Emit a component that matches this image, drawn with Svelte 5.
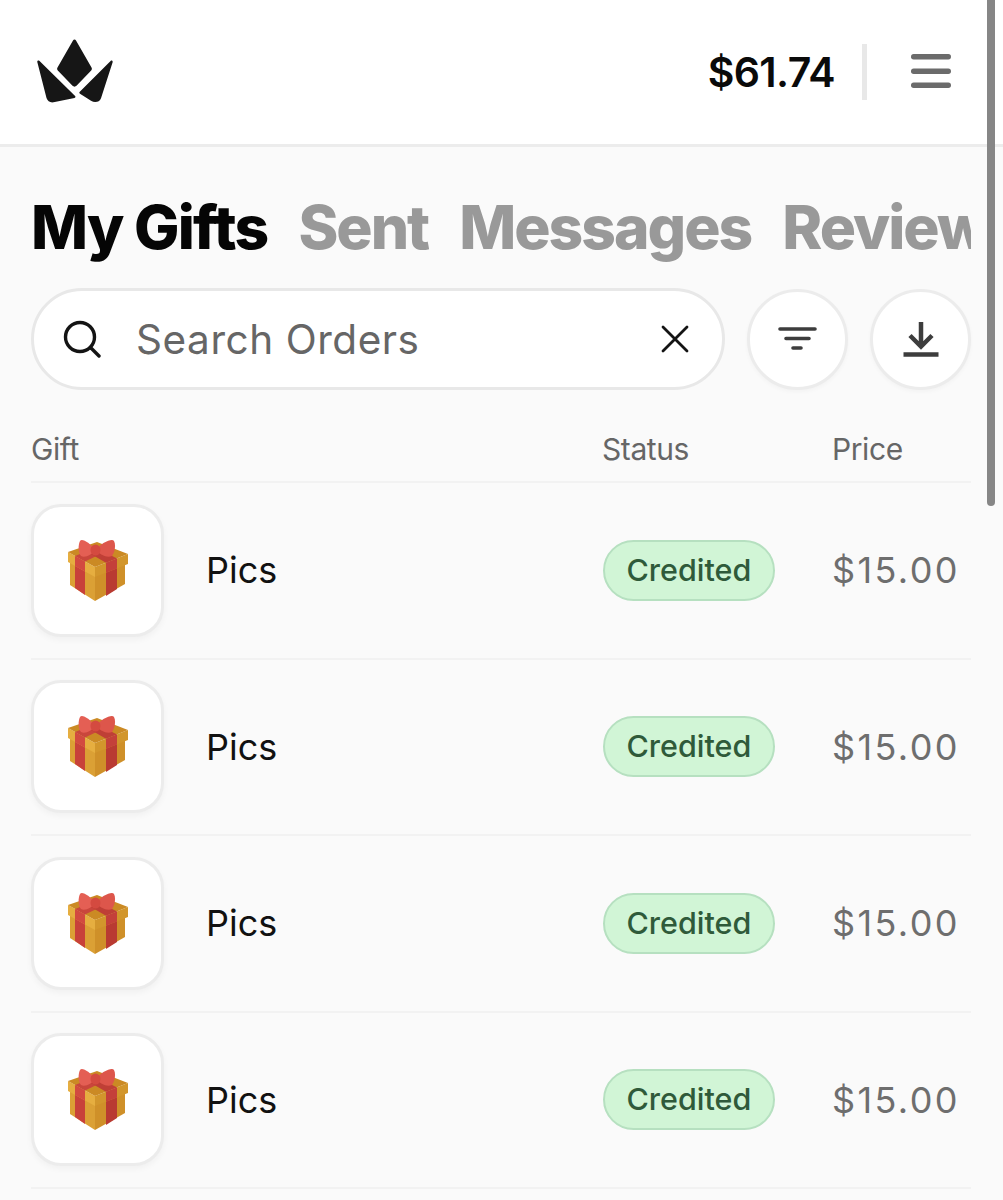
<script>
  const rows = [1, 2, 3, 4].map(() => ({ name: 'Pics', status: 'Credited', price: '$15.00' }));
</script>

<div class="page">
  <header class="topbar">
    <svg class="logo" viewBox="0 0 76 64" aria-label="logo">
      <path d="M36 1.500c.7-1.200 2.300-1.200 3 0l15.500 27c.6 1 .5 2.200-.3 3L39.500 46.800c-1.100 1.100-2.900 1.100-4 0L20.800 31.500c-.8-.8-.9-2-.3-3z" fill="#161616" />
      <path d="M.3 23c-.3-1.300 1-2 2-1.200l35.800 35.300c.7.700.4 1.700-.6 1.900L16.500 63.300c-3.500.5-6-1.300-7-4.300z" fill="#161616" />
      <path d="M75.700 23c.2-1.300-1.200-2-2.100-1.100L42.800 52.800c-.7.700-.6 1.500.2 2l11 7c3.600 2.200 8.500 1.500 10-2.600z" fill="#161616" />
    </svg>
    <div class="account">
      <span class="balance">$61.74</span>
      <span class="divider"></span>
      <svg class="menu" viewBox="0 0 40 36" aria-label="menu">
        <rect x="0" y="0" width="40" height="5.500" rx="2.700" />
        <rect x="0" y="14.500" width="40" height="5.500" rx="2.700" />
        <rect x="0" y="28.500" width="40" height="5.500" rx="2.700" />
      </svg>
    </div>
  </header>

  <main class="content">
    <nav class="tabs">
      <span class="tab active">My Gifts</span>
      <span class="tab">Sent</span>
      <span class="tab">Messages</span>
      <span class="tab">Reviews</span>
    </nav>

    <div class="tools">
      <div class="search">
        <svg class="search-icon" viewBox="0 0 38 38" fill="none" stroke="#141414" stroke-width="3.400" stroke-linecap="round">
          <circle cx="17" cy="17" r="14.500" />
          <path d="M28 28l8 8" />
        </svg>
        <span class="placeholder">Search Orders</span>
        <svg class="clear" viewBox="0 0 28 28" fill="none" stroke="#141414" stroke-width="2.800" stroke-linecap="round">
          <path d="M2 2l24 24M26 2L2 26" />
        </svg>
      </div>
      <button class="round" aria-label="filter">
        <svg viewBox="0 0 40 28" width="40" height="28" fill="none" stroke="#3d3d3d" stroke-width="3.600" stroke-linecap="round">
          <path d="M2 4h35M8 13.500h23M15 23h8" />
        </svg>
      </button>
      <button class="round" aria-label="download">
        <svg viewBox="0 0 36 36" width="36" height="36" fill="none" stroke="#3d3d3d" stroke-width="4.500">
          <path d="M18 1v24M7 14.500l11 11 11-11" />
          <path d="M0.500 33.500h35" />
        </svg>
      </button>
    </div>

    <div class="table-head">
      <span>Gift</span>
      <span>Status</span>
      <span>Price</span>
    </div>

    {#each rows as row}
      <div class="row">
        <div class="gift">
          <div class="thumb">
            <svg class="present" viewBox="0 0 62 63">
              <!-- box sides -->
              <path d="M3 22L28 36V62L3 46z" fill="#dba035" />
              <path d="M28 36L58 23V45L28 62z" fill="#cf9029" />
              <path d="M8 26l10 5v25l-10-7z" fill="#c8413a" />
              <path d="M39 31l11-5v24l-11 7z" fill="#b93a32" />
              <!-- lid -->
              <path d="M1 13L28 28V38L1 23z" fill="#e6ae40" />
              <path d="M28 28L61 15V25L28 38z" fill="#d2962c" />
              <path d="M1 13L30 3L61 15L28 28z" fill="#cb8a24" />
              <path d="M8 17l10 5.500v10L8 27z" fill="#d24a40" />
              <path d="M39 23.800l11-4.400v10l-11 4.400z" fill="#c4403a" />
              <path d="M8 17l10 5.500L40 12l-9-4z" fill="#c9463c" />
              <path d="M39 23.800l11-4.400L26 7l-9 4z" fill="#bf3f36" />
              <!-- bow -->
              <path d="M28 11C23 4 15-1 13 2c-2 4-2 12 1 15 4 2 11-1 14-6z" fill="#e45f54" />
              <path d="M29 11C34 4 45-1 47 2c2 4 1 11-2 15-5 2-12-1-16-6z" fill="#dd564b" />
              <ellipse cx="28.500" cy="11" rx="5" ry="5.500" fill="#d44a40" />
            </svg>
          </div>
          <span class="name">{row.name}</span>
        </div>
        <div><span class="badge">{row.status}</span></div>
        <div class="price">{row.price}</div>
      </div>
    {/each}
  </main>

  <div class="scrollbar"></div>
</div>

<style>
  :global(body) {
    background: #fafafa;
  }

  .page {
    position: relative;
    min-height: 1200px;
    overflow: hidden;
    background: #fafafa;
    font-family: Inter, "Liberation Sans", sans-serif;
  }

  .topbar {
    height: 144px;
    box-sizing: content-box;
    display: flex;
    align-items: center;
    justify-content: space-between;
    padding: 0 52px 0 37px;
    background: #fff;
    border-bottom: 3px solid #ececec;
  }

  .logo {
    width: 76px;
    height: 64px;
    margin-top: -2px;
  }

  .account {
    display: flex;
    align-items: center;
  }

  .balance {
    font-size: 41px;
    font-weight: 600;
    letter-spacing: -0.6px;
    color: #0a0a0a;
  }

  .divider {
    width: 5px;
    height: 56px;
    margin: 0 44px 0 27px;
    background: #e8e8e8;
  }

  .menu {
    width: 40px;
    height: 36px;
    fill: #6b6b6b;
  }

  .content {
    padding: 0 32px 0 31px;
  }

  .tabs {
    display: flex;
    gap: 31px;
    padding-top: 44px;
    overflow: hidden;
    white-space: nowrap;
    font-size: 60.500px;
    font-weight: 800;
    line-height: 72px;
    letter-spacing: -2px;
    color: #999;
  }

  .tab.active {
    letter-spacing: -1.800px;
    color: #050505;
  }

  .tools {
    display: flex;
    align-items: center;
    gap: 22px;
    margin-top: 25px;
  }

  .search {
    flex: 1;
    height: 102px;
    box-sizing: border-box;
    display: flex;
    align-items: center;
    padding: 0 33px 0 29px;
    background: #fff;
    border: 3px solid #e8e8e8;
    border-radius: 51px;
  }

  .search-icon {
    width: 38px;
    height: 38px;
  }

  .placeholder {
    flex: 1;
    margin-left: 35px;
    font-size: 40.500px;
    letter-spacing: 0.550px;
    color: #666;
  }

  .clear {
    width: 28px;
    height: 28px;
  }

  .round {
    width: 101px;
    height: 101px;
    margin: 0;
    padding: 0;
    display: flex;
    align-items: center;
    justify-content: center;
    flex: none;
    background: #fff;
    border: 3px solid #ececec;
    border-radius: 50%;
    box-shadow: 0 2px 4px rgba(0, 0, 0, 0.03);
  }

  .table-head,
  .row {
    display: grid;
    grid-template-columns: 1fr 230px 139px;
    align-items: center;
    border-bottom: 2px solid #f2f2f2;
  }

  .table-head {
    height: 93px;
    box-sizing: border-box;
    padding-top: 27px;
    font-size: 30px;
    color: #666;
    letter-spacing: -0.400px;
  }

  .row {
    height: 176.500px;
    box-sizing: border-box;
  }

  .gift {
    display: flex;
    align-items: center;
    gap: 42px;
  }

  .thumb {
    width: 133px;
    height: 133px;
    box-sizing: border-box;
    display: flex;
    align-items: center;
    justify-content: center;
    background: #fff;
    border: 3px solid #ececec;
    border-radius: 30px;
    box-shadow: 0 3px 6px rgba(0, 0, 0, 0.04);
  }

  .present {
    width: 62px;
    height: 63px;
  }

  .name {
    font-size: 36px;
    font-weight: 400;
    color: #111;
  }

  .badge {
    display: inline-block;
    margin-left: 1px;
    padding: 0 21.500px;
    height: 61px;
    line-height: 56px;
    box-sizing: border-box;
    font-size: 30.500px;
    font-weight: 500;
    color: #2f5a3a;
    background: #d1f5d6;
    border: 2.500px solid #b6e0c0;
    border-radius: 31px;
  }

  .price {
    font-size: 36px;
    letter-spacing: 2.400px;
    color: #6e6e6e;
    white-space: nowrap;
  }

  .scrollbar {
    position: absolute;
    top: 0;
    left: 987px;
    width: 8px;
    height: 506px;
    border-radius: 0 0 4px 4px;
    background: #868686;
  }
</style>
